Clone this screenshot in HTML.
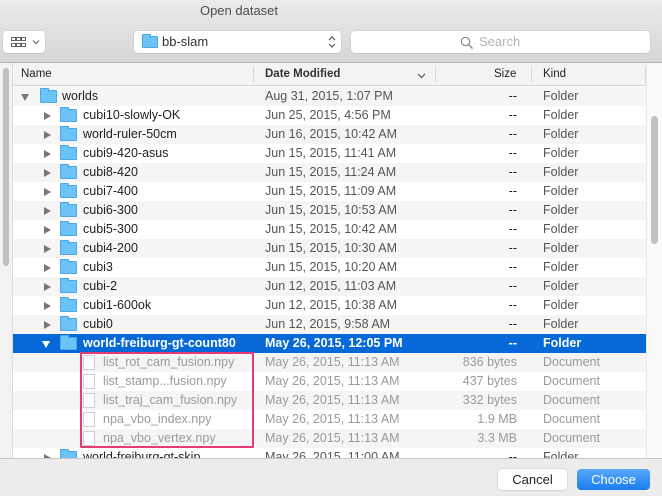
<!DOCTYPE html>
<html><head><style>
*{margin:0;padding:0;box-sizing:border-box}
body{width:662px;height:496px;overflow:hidden;font-family:"Liberation Sans",sans-serif;font-size:12.5px;color:#222;background:#ececec;position:relative}
.chrome{position:absolute;left:0;top:0;width:662px;height:63px;background:linear-gradient(#ebebeb,#d6d6d6);border-bottom:1px solid #b5b5b5}
.title{position:absolute;top:3px;left:0;width:478px;text-align:center;font-size:13px;color:#4d4d4d}
.btn{position:absolute;background:#fff;border-radius:4px;box-shadow:0 0 0 .5px #c8c8c8,0 1px 1px rgba(0,0,0,.08)}
.side{position:absolute;left:0;top:63px;width:13px;height:395px;background:#f2f2f2;border-right:1px solid #ddd}
.lthumb{position:absolute;left:3px;top:68px;width:6px;height:198px;background:#c1c1c1;border-radius:3px}
.list{position:absolute;left:13px;top:63px;width:633px;height:395px;background:#fff;overflow:hidden}
.rcol{position:absolute;left:646px;top:63px;width:16px;height:395px;background:#fafafa;border-left:1px solid #e8e8e8}
.rthumb{position:absolute;left:651px;top:116px;width:7px;height:128px;background:#c1c1c1;border-radius:4px}
.hdr{position:absolute;left:0;top:0;width:633px;height:23px;background:#f3f3f3;border-bottom:1px solid #d5d5d5;font-size:11.5px}
.hdr span{position:absolute;top:5px}
.sep{position:absolute;top:3px;width:1px;height:17px;background:#d8d8d8}
.row{position:absolute;left:0;width:633px;height:19px;line-height:19px}
.row.a{background:#f5f5f5}
.row.sel{background:#0768d8;color:#fff}
.c{position:absolute;top:0;white-space:nowrap}
.d{left:252px}
.s{right:129px;text-align:right}
.k{left:530px}
.row .d,.row .k{color:#555}
.row.sel .c{color:#fff;font-weight:bold}
.row.g .c{color:#9a9a9a}
.tri{position:absolute;top:6px;width:0;height:0;border-top:4px solid transparent;border-bottom:4px solid transparent;border-left:7px solid #777}
.trid{position:absolute;top:7px;width:0;height:0;border-left:4.5px solid transparent;border-right:4.5px solid transparent;border-top:7px solid #777}
.fold{position:absolute;top:3px;width:17px;height:13px;background:#6cc3f7;border:1px solid #4aa8e6;border-radius:1px}
.fold:before{content:"";position:absolute;left:-1px;top:-3px;width:7px;height:3px;background:#6cc3f7;border:1px solid #4aa8e6;border-bottom:none;border-radius:1px 1px 0 0}
.doc{position:absolute;top:2px;width:12px;height:15px;border:1px solid #cfcfcf;background:#fff}
.pink{position:absolute;left:80px;top:352px;width:174px;height:96px;border:2px solid #e63a78;border-radius:1px}
</style></head><body>
<div class="chrome">
<div class="title">Open dataset</div>
<div class="btn" style="left:3px;top:31px;width:42px;height:22px">
<svg width="42" height="22" style="position:absolute;left:0;top:0"><g fill="none" stroke="#666" stroke-width="1"><rect x="8.5" y="6.5" width="4" height="3"/><rect x="13.5" y="6.5" width="4" height="3"/><rect x="18.5" y="6.5" width="4" height="3"/><rect x="8.5" y="12.5" width="4" height="3"/><rect x="13.5" y="12.5" width="4" height="3"/><rect x="18.5" y="12.5" width="4" height="3"/><path d="M30 9.5l3 3 3-3" stroke-width="1.2"/></g></svg></div>
<div class="btn" style="left:134px;top:31px;width:207px;height:22px">
<div class="fold" style="left:8px;top:5px;width:16px;height:12px"></div>
<span style="position:absolute;left:28px;top:3px;font-size:13px;color:#333">bb-slam</span>
<svg width="10" height="16" style="position:absolute;left:193px;top:3px"><path d="M2 6l3-3 3 3M2 10l3 3 3-3" fill="none" stroke="#555" stroke-width="1.2"/></svg></div>
<div class="btn" style="left:351px;top:31px;width:299px;height:22px">
<svg width="14" height="14" style="position:absolute;left:109px;top:5px"><circle cx="5.5" cy="5.5" r="4.2" fill="none" stroke="#888" stroke-width="1.2"/><path d="M8.5 8.5l4 4" stroke="#888" stroke-width="1.4"/></svg>
<span style="position:absolute;left:128px;top:3px;font-size:13px;color:#b4b4b4">Search</span></div>
</div>
<div class="side"></div><div class="lthumb"></div>
<div class="list">
<div class="hdr"><span style="left:8px">Name</span><div class="sep" style="left:240px"></div><span style="left:252px;font-weight:bold;color:#333">Date Modified</span>
<svg width="10" height="8" style="position:absolute;left:404px;top:9px"><path d="M1 2l3.5 3.5L8 2" fill="none" stroke="#555" stroke-width="1.2"/></svg>
<div class="sep" style="left:422px"></div><span style="left:481px">Size</span><div class="sep" style="left:518px"></div><span style="left:530px">Kind</span><div class="sep" style="left:632px"></div></div>

<div class="row a" style="top:24px"><div class="trid" style="left:8px"></div><div class="fold" style="left:27px"></div><span class="c" style="left:49px">worlds</span><span class="c d">Aug 31, 2015, 1:07 PM</span><span class="c s">--</span><span class="c k">Folder</span></div>
<div class="row" style="top:43px"><div class="tri" style="left:31px"></div><div class="fold" style="left:47px"></div><span class="c" style="left:70px">cubi10-slowly-OK</span><span class="c d">Jun 25, 2015, 4:56 PM</span><span class="c s">--</span><span class="c k">Folder</span></div>
<div class="row a" style="top:62px"><div class="tri" style="left:31px"></div><div class="fold" style="left:47px"></div><span class="c" style="left:70px">world-ruler-50cm</span><span class="c d">Jun 16, 2015, 10:42 AM</span><span class="c s">--</span><span class="c k">Folder</span></div>
<div class="row" style="top:81px"><div class="tri" style="left:31px"></div><div class="fold" style="left:47px"></div><span class="c" style="left:70px">cubi9-420-asus</span><span class="c d">Jun 15, 2015, 11:41 AM</span><span class="c s">--</span><span class="c k">Folder</span></div>
<div class="row a" style="top:100px"><div class="tri" style="left:31px"></div><div class="fold" style="left:47px"></div><span class="c" style="left:70px">cubi8-420</span><span class="c d">Jun 15, 2015, 11:24 AM</span><span class="c s">--</span><span class="c k">Folder</span></div>
<div class="row" style="top:119px"><div class="tri" style="left:31px"></div><div class="fold" style="left:47px"></div><span class="c" style="left:70px">cubi7-400</span><span class="c d">Jun 15, 2015, 11:09 AM</span><span class="c s">--</span><span class="c k">Folder</span></div>
<div class="row a" style="top:138px"><div class="tri" style="left:31px"></div><div class="fold" style="left:47px"></div><span class="c" style="left:70px">cubi6-300</span><span class="c d">Jun 15, 2015, 10:53 AM</span><span class="c s">--</span><span class="c k">Folder</span></div>
<div class="row" style="top:157px"><div class="tri" style="left:31px"></div><div class="fold" style="left:47px"></div><span class="c" style="left:70px">cubi5-300</span><span class="c d">Jun 15, 2015, 10:42 AM</span><span class="c s">--</span><span class="c k">Folder</span></div>
<div class="row a" style="top:176px"><div class="tri" style="left:31px"></div><div class="fold" style="left:47px"></div><span class="c" style="left:70px">cubi4-200</span><span class="c d">Jun 15, 2015, 10:30 AM</span><span class="c s">--</span><span class="c k">Folder</span></div>
<div class="row" style="top:195px"><div class="tri" style="left:31px"></div><div class="fold" style="left:47px"></div><span class="c" style="left:70px">cubi3</span><span class="c d">Jun 15, 2015, 10:20 AM</span><span class="c s">--</span><span class="c k">Folder</span></div>
<div class="row a" style="top:214px"><div class="tri" style="left:31px"></div><div class="fold" style="left:47px"></div><span class="c" style="left:70px">cubi-2</span><span class="c d">Jun 12, 2015, 11:03 AM</span><span class="c s">--</span><span class="c k">Folder</span></div>
<div class="row" style="top:233px"><div class="tri" style="left:31px"></div><div class="fold" style="left:47px"></div><span class="c" style="left:70px">cubi1-600ok</span><span class="c d">Jun 12, 2015, 10:38 AM</span><span class="c s">--</span><span class="c k">Folder</span></div>
<div class="row a" style="top:252px"><div class="tri" style="left:31px"></div><div class="fold" style="left:47px"></div><span class="c" style="left:70px">cubi0</span><span class="c d">Jun 12, 2015, 9:58 AM</span><span class="c s">--</span><span class="c k">Folder</span></div>
<div class="row sel" style="top:271px"><div class="trid" style="left:29px;border-top-color:#fff"></div><div class="fold" style="left:47px"></div><span class="c" style="left:70px">world-freiburg-gt-count80</span><span class="c d">May 26, 2015, 12:05 PM</span><span class="c s">--</span><span class="c k">Folder</span></div>
<div class="row a g" style="top:290px"><div class="doc" style="left:70px"></div><span class="c" style="left:90px">list_rot_cam_fusion.npy</span><span class="c d">May 26, 2015, 11:13 AM</span><span class="c s">836 bytes</span><span class="c k">Document</span></div>
<div class="row g" style="top:309px"><div class="doc" style="left:70px"></div><span class="c" style="left:90px">list_stamp...fusion.npy</span><span class="c d">May 26, 2015, 11:13 AM</span><span class="c s">437 bytes</span><span class="c k">Document</span></div>
<div class="row a g" style="top:328px"><div class="doc" style="left:70px"></div><span class="c" style="left:90px">list_traj_cam_fusion.npy</span><span class="c d">May 26, 2015, 11:13 AM</span><span class="c s">332 bytes</span><span class="c k">Document</span></div>
<div class="row g" style="top:347px"><div class="doc" style="left:70px"></div><span class="c" style="left:90px">npa_vbo_index.npy</span><span class="c d">May 26, 2015, 11:13 AM</span><span class="c s">1.9 MB</span><span class="c k">Document</span></div>
<div class="row a g" style="top:366px"><div class="doc" style="left:70px"></div><span class="c" style="left:90px">npa_vbo_vertex.npy</span><span class="c d">May 26, 2015, 11:13 AM</span><span class="c s">3.3 MB</span><span class="c k">Document</span></div>
<div class="row" style="top:385px"><div class="tri" style="left:31px"></div><div class="fold" style="left:47px"></div><span class="c" style="left:70px">world-freiburg-gt-skip</span><span class="c d">May 26, 2015, 11:00 AM</span><span class="c s">--</span><span class="c k">Folder</span></div>
</div>
<div class="rcol"></div><div class="rthumb"></div>
<div class="pink"></div>
<div style="position:absolute;left:0;top:458px;width:662px;height:38px;background:#ececec;border-top:1px solid #c8c8c8"></div>
<div class="btn" style="left:498px;top:469px;width:69px;height:21px;text-align:center;line-height:21px;font-size:13px">Cancel</div>
<div style="position:absolute;left:577px;top:469px;width:73px;height:21px;border-radius:4px;background:linear-gradient(#5aa8fa,#1a7cf0);color:#fff;text-align:center;line-height:21px;font-size:13px">Choose</div>
</body></html>
